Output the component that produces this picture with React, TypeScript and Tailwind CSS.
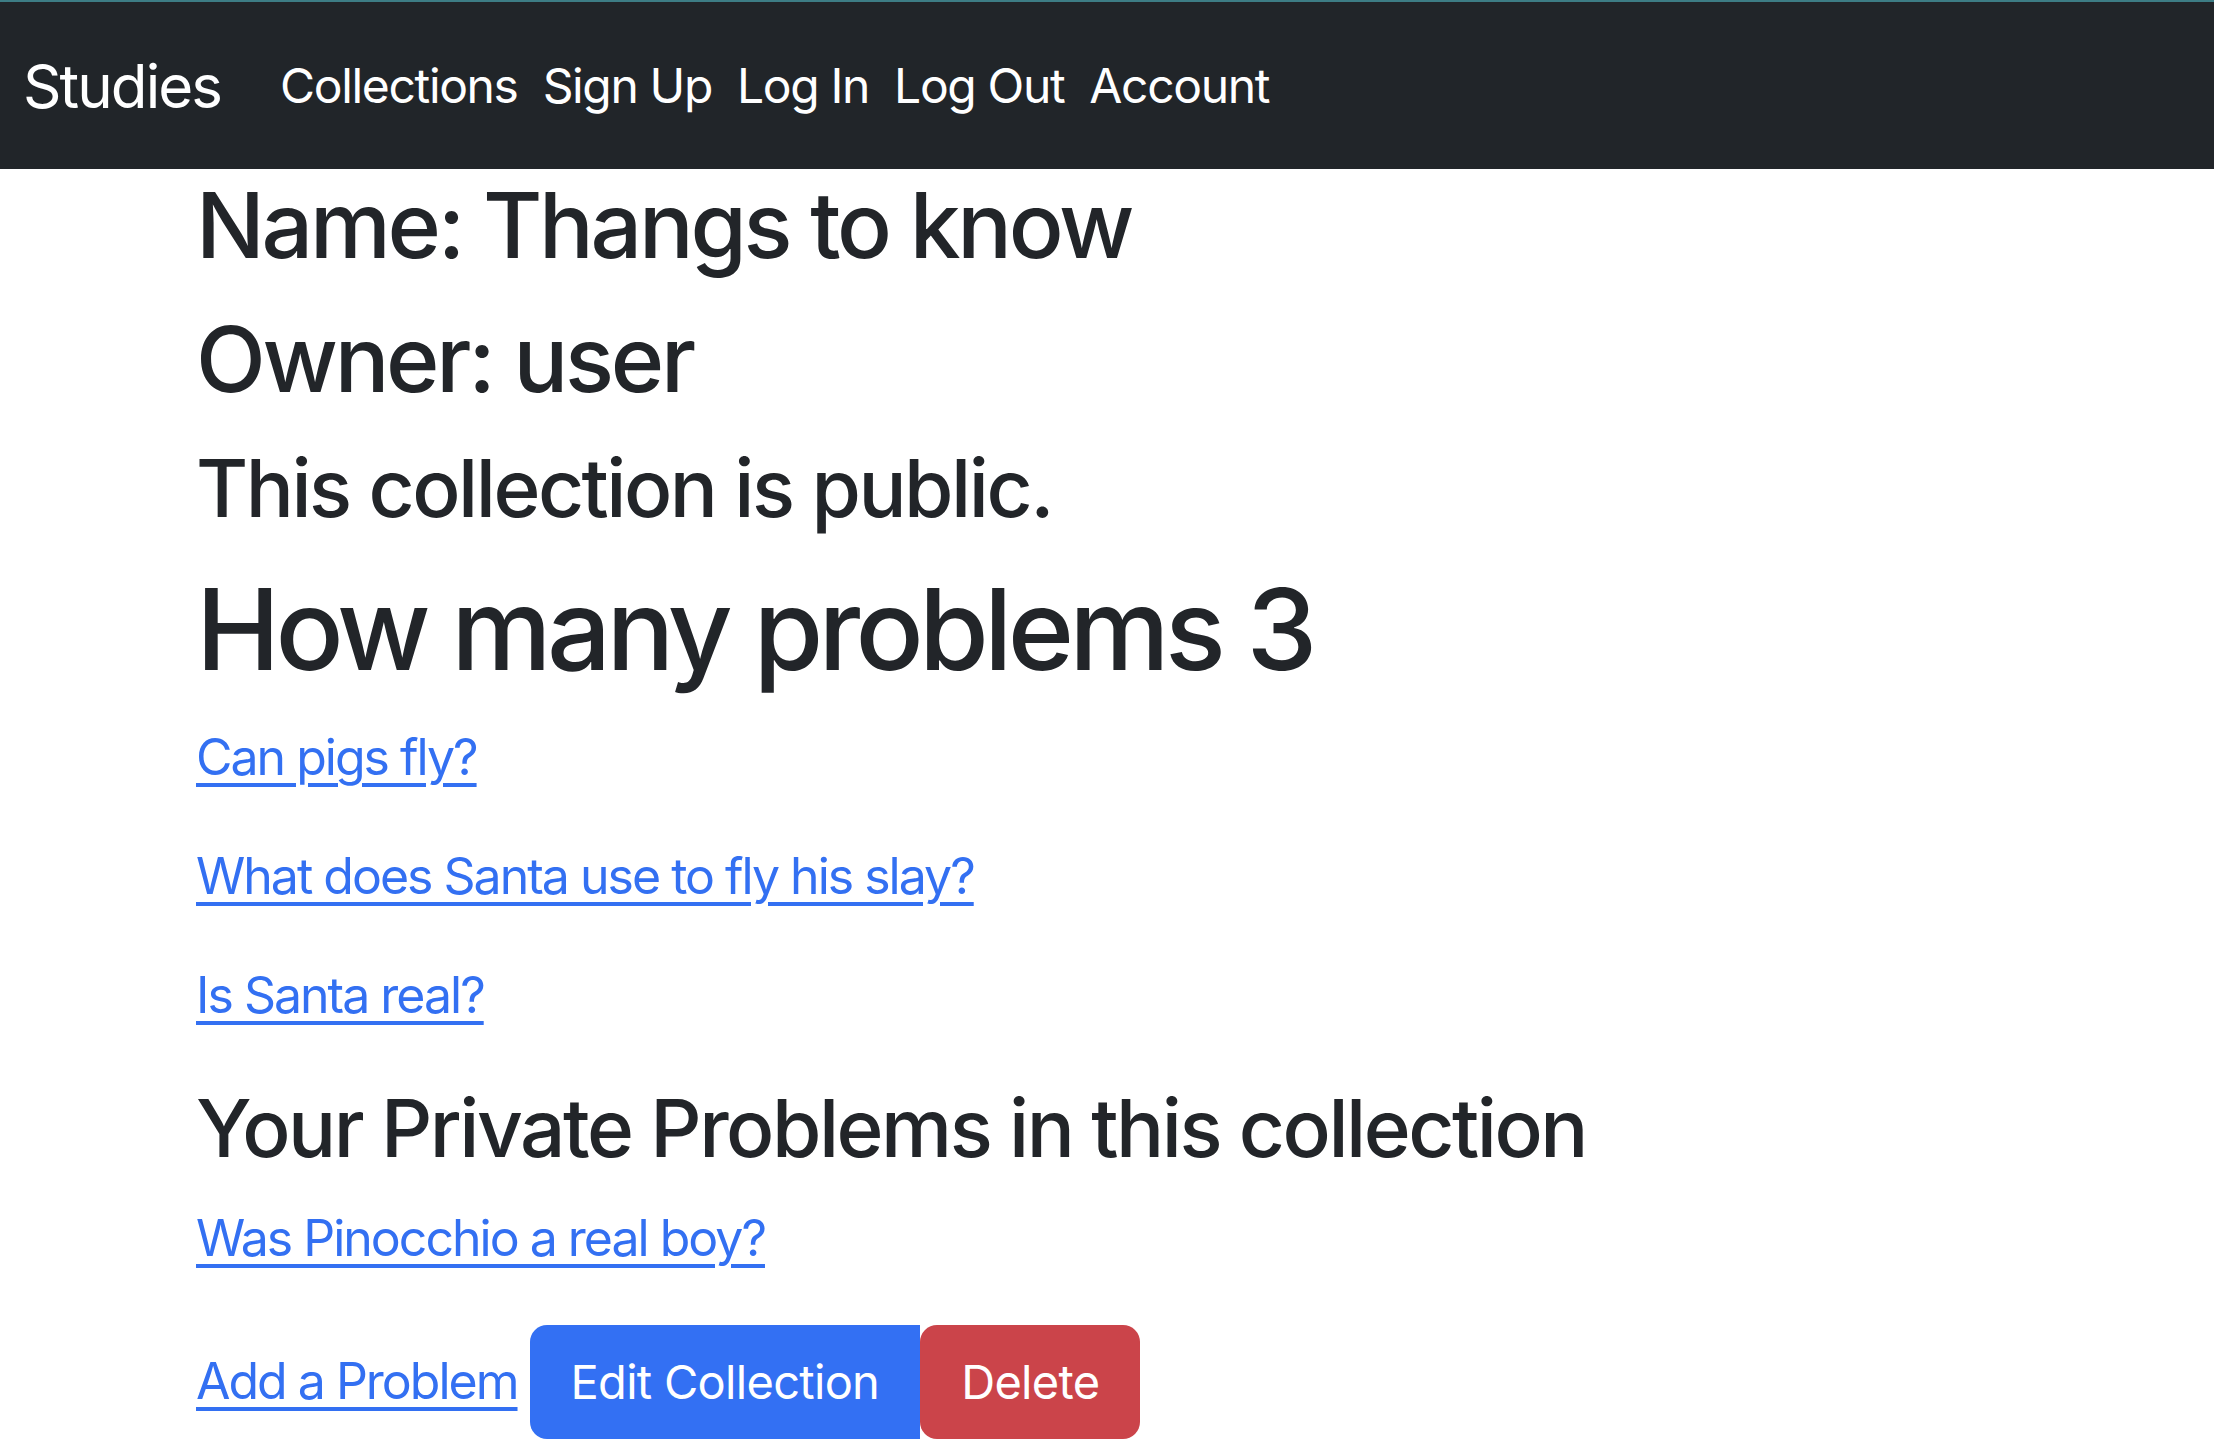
import React from "react";

export default function App() {
  const font = { fontFamily: "Inter, 'Noto Sans', sans-serif" };
  const link = "underline decoration-[4px] underline-offset-[8px] tracking-[-0.04em]";
  return (
    <div className="min-h-[1448px] w-[2214px] bg-white text-[#222529]" style={font}>
      <nav className="flex h-[169px] items-center border-t-2 border-[#3d7d85] bg-[#212529] pl-[23px]">
        <span className="text-[60px] leading-none tracking-[-0.032em] text-white">Studies</span>
        <div className="ml-[59px] flex items-center gap-[25px] text-[48px] leading-none tracking-[-0.028em] text-white">
          <span>Collections</span>
          <span>Sign Up</span>
          <span>Log In</span>
          <span>Log Out</span>
          <span>Account</span>
        </div>
      </nav>
      <main className="flex flex-col pl-[196px]">
        <h2 className="mt-[2px] text-[91px] font-medium leading-[1.2] tracking-[-0.036em]">Name: Thangs to know</h2>
        <h2 className="mt-[25px] text-[91px] font-medium leading-[1.2] tracking-[-0.036em]">Owner: user</h2>
        <h3 className="mt-[26px] text-[80px] font-medium leading-[1.2] tracking-[-0.031em]">This collection is public.</h3>
        <h1 className="mt-[26px] text-[113px] font-medium leading-[1.2] tracking-[-0.042em]">How many problems 3</h1>
        <div className="mt-[22px] flex flex-col items-start gap-[44px] text-[50px] leading-[1.5] text-[#3370f2]">
          <a className={link} href="#">Can pigs fly?</a>
          <a className={link} href="#">What does Santa use to fly his slay?</a>
          <a className={link} href="#">Is Santa real?</a>
        </div>
        <h3 className="mt-[47px] text-[80px] font-medium leading-[1.2] tracking-[-0.031em]">Your Private Problems in this collection</h3>
        <div className="mt-[25px] flex flex-col items-start text-[50px] leading-[1.5] text-[#3370f2]">
          <a className={link} href="#">Was Pinocchio a real boy?</a>
        </div>
        <div className="mt-[49px] flex items-center">
          <a className={"mr-[12px] text-[50px] leading-[1.5] text-[#3370f2] " + link} href="#">Add a Problem</a>
          <button className="h-[114px] rounded-l-[17px] bg-[#3370f3] px-[41px] text-[47px] leading-none tracking-[-0.015em] text-white">Edit Collection</button>
          <button className="h-[114px] rounded-[17px] bg-[#cb444a] px-[41px] text-[47px] leading-none tracking-[-0.015em] text-white">Delete</button>
        </div>
      </main>
    </div>
  );
}
